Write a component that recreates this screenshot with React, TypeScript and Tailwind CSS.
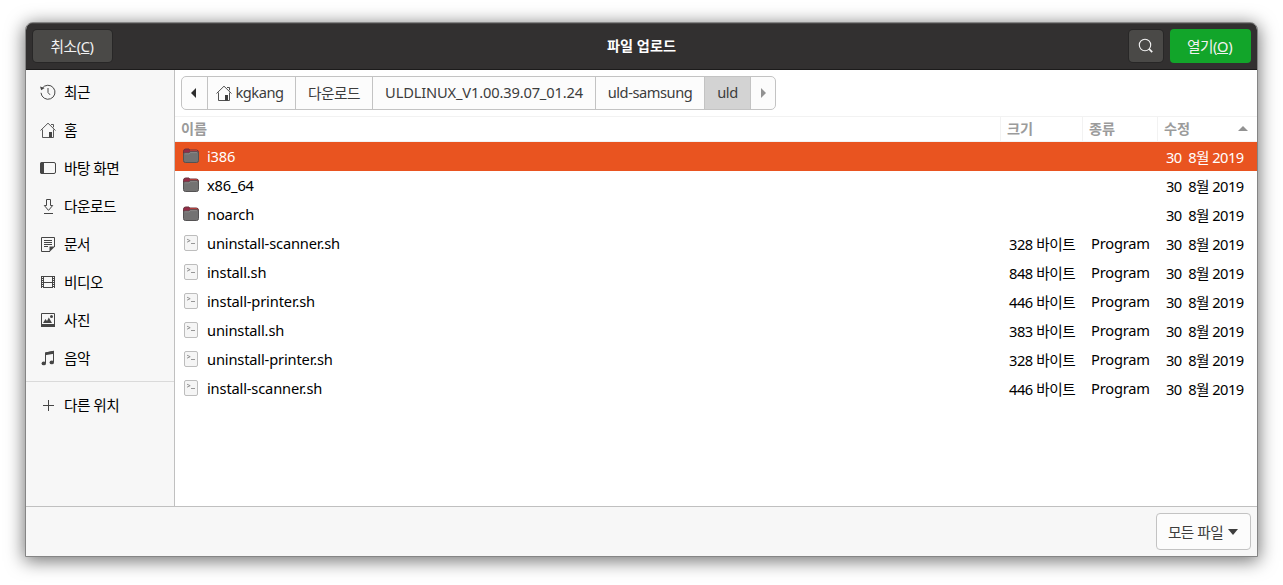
import type { ReactNode } from "react";
import clsx from "clsx";

const svg = (children: ReactNode) => (
  <svg width="16" height="16" viewBox="0 0 16 16" fill="none" stroke="currentColor" className="shrink-0">{children}</svg>
);

const HomeIcon = () => svg(<>
  <path d="M.5 8.5 8 1.2l7.5 7.3M2.5 7.5v8h11v-8M11 2.5h2.5v2.8" strokeWidth=".9" />
  <path d="M9 10h3v5.5H9z" fill="currentColor" stroke="none" />
</>);

const RecentIcon = () => svg(<>
  <path d="M2.2 4.3A7 7 0 1 1 1 8.8M8 4v4.5l2 2.3" />
  <path d="M0 2.5 1.2 6.3 4.6 4z" fill="currentColor" stroke="none" />
</>);

const DesktopIcon = () => svg(<>
  <rect x=".5" y="2.5" width="15" height="11" rx="1.5" />
  <path d="M0 4q0-2 2-2h2v12H2q-2 0-2-2z" fill="currentColor" stroke="none" />
</>);

const DownloadIcon = () => svg(<path d="M6.5 1.5h4v6h2.2L8.5 12.4 4.3 7.5h2.2zM4 15.5h9" />);

const DocumentIcon = () => svg(<>
  <path d="M14.5 11V1.5h-13v14H10M4 4.5h8M4 6.5h8M4 8.5h8M4 10.5h4" />
  <path d="M9.5 16v-5.5H15z" fill="currentColor" stroke="none" />
</>);

const VideoIcon = () => svg(<>
  <path d="M3.5 2v12M12.5 2v12M3 2.5h10M3 8.5h10M3 13.5h10" />
  <path d="M2.5 2v12M13.5 2v12" strokeDasharray="1 1" />
  <path d="M1.5 2v12M14.5 2v12" />
</>);

const PictureIcon = () => svg(<>
  <path d="M1.5 1.5h13v13h-13z" />
  <path d="M1 12h14v3H1zM3 11l2.5-4 1.5 2 1.8-3.5L12 11z" fill="currentColor" stroke="none" />
  <circle cx="11.5" cy="4.5" r="1.5" fill="currentColor" stroke="none" />
</>);

const MusicIcon = () => svg(<>
  <path d="M5.5 13V3l8-1.6V12" />
  <path d="M5 2.4 14 .8v3L5 5.2z" fill="currentColor" stroke="none" />
  <ellipse cx="3.8" cy="13.4" rx="2.2" ry="1.9" fill="currentColor" stroke="none" />
  <ellipse cx="11.8" cy="12.4" rx="2.2" ry="1.9" fill="currentColor" stroke="none" />
</>);

const PlusIcon = () => svg(<path d="M8.5 3v11M3 8.5h11" />);

const SearchIcon = () => svg(<>
  <circle cx="7" cy="7" r="5.7" strokeWidth="1.1" />
  <path d="m11.2 11.2 3 3" strokeWidth="1.7" />
</>);

const FolderIcon = () => (
  <svg width="16" height="16" viewBox="0 0 16 16" className="shrink-0">
    <path d="M.5 3.2Q.5 1 2.7 1h3.1l1.1 1h6.4q2.2 0 2.2 2.2V8H.5z" fill="#942c46" stroke="#66343d" />
    <path d="M7 2.8h7l1 1" stroke="#c9463a" fill="none" />
    <path d="M.5 6q0-1 1-1h4.2l1.4-1.2h7.2q1.2 0 1.2 1.2v7.6q0 1.9-1.9 1.9H2.4Q.5 14.5.5 12.6z" fill="#737272" stroke="#545253" />
    <path d="M1.5 5.8H6l1.400-1.200h6.800" stroke="#989595" strokeWidth=".7" fill="none" />
  </svg>
);

const ScriptIcon = () => (
  <svg width="16" height="16" viewBox="0 0 16 16" fill="none" className="shrink-0">
    <rect x="1.5" y=".5" width="13" height="15" rx="1.5" fill="#f5f5f5" stroke="#bdbdbd" />
    <path d="m4 4.2 3.2 1.5L4 7.2M8 8.5h4" stroke="#8c8c8c" strokeWidth=".9" />
  </svg>
);

const places = [
  { name: "최근", Icon: RecentIcon },
  { name: "홈", Icon: HomeIcon },
  { name: "바탕 화면", Icon: DesktopIcon },
  { name: "다운로드", Icon: DownloadIcon },
  { name: "문서", Icon: DocumentIcon },
  { name: "비디오", Icon: VideoIcon },
  { name: "사진", Icon: PictureIcon },
  { name: "음악", Icon: MusicIcon },
];

const files = [
  { name: "i386", folder: true, selected: true },
  { name: "x86_64", folder: true },
  { name: "noarch", folder: true },
  { name: "uninstall-scanner.sh", size: "328" },
  { name: "install.sh", size: "848" },
  { name: "install-printer.sh", size: "446" },
  { name: "uninstall.sh", size: "383" },
  { name: "uninstall-printer.sh", size: "328" },
  { name: "install-scanner.sh", size: "446" },
];

const Place = ({ name, Icon }: { name: string; Icon: () => ReactNode }) => (
  <div className="flex h-[38px] items-center gap-2 pl-3.5 text-black">
    <span className="text-[#454545]"><Icon /></span>
    <span className="tracking-[-0.5px]">{name}</span>
  </div>
);

const App = () => (
  <div className="h-[585px] overflow-hidden bg-white pl-[25px] pt-[22px] font-['Noto_Sans','Noto_Sans_CJK_KR',sans-serif] text-[14.67px] leading-5 whitespace-nowrap">
    <div className="flex h-[535px] w-[1233px] flex-col overflow-hidden rounded-t-lg border border-[#858585] bg-white shadow-[0_3px_18px_1px_rgba(0,0,0,0.55)]">
      <header className="flex h-[47px] shrink-0 items-center border-b border-[#1c1b1b] bg-[#323030] px-1.5 text-[#f2f2f2] shadow-[inset_0_1px_#474545]">
        <div className="flex flex-1">
          <button className="ml-px h-8 w-[79px] rounded-[4px] bg-[#4a4947] pr-px tracking-[-0.4px] shadow-[0_0_0_1px_#282727]">취소(<u>C</u>)</button>
        </div>
        <h1 className="text-[14.2px] font-bold text-white">파일 업로드</h1>
        <div className="flex flex-1 items-center justify-end gap-[7px]">
          <button className="flex h-8 w-[34px] items-center justify-center rounded-[4px] bg-[#4a4947] shadow-[0_0_0_1px_#282727]"><SearchIcon /></button>
          <button className="h-[34px] w-[81px] rounded-[4px] bg-[#12a52a] pr-0.5 tracking-[-0.4px]">열기(<u>O</u>)</button>
        </div>
      </header>

      <div className="flex min-h-0 flex-1">
        <aside className="w-[149px] shrink-0 border-r border-[#c0c0c0] bg-[#f7f7f7] pt-[3px]">
          {places.map((p) => <Place key={p.name} {...p} />)}
          <div className="my-1 border-t border-[#dadada]" />
          <Place name="다른 위치" Icon={PlusIcon} />
        </aside>

        <main className="min-w-0 flex-1">
          <div className="h-[46px] pl-1.5 pt-1.5">
            <nav className="flex h-[34px] w-[595px] overflow-hidden rounded-[5px] border border-[#c3c3c3] bg-[#fcfcfc] tracking-[-0.16px] text-[#3d3d3d] *:flex *:items-center *:justify-center *:border-r *:border-[#c3c3c3]">
              <div className="w-[26px] pr-0.5"><svg width="5" height="10"><path d="M5 0v10L0 5z" fill="#2e2e2e" /></svg></div>
              <div className="w-[88px] gap-1 pr-1 tracking-[-0.5px]"><HomeIcon /><span className="pb-0.5">kgkang</span></div>
              <div className="w-[77px] tracking-[-0.5px]">다운로드</div>
              <div className="w-[223px] pb-0.5">ULDLINUX_V1.00.39.07_01.24</div>
              <div className="w-[109px] pb-0.5 tracking-[-0.45px]">uld-samsung</div>
              <div className="w-[46px] bg-[#d3d3d3] pb-0.5 tracking-[-0.5px]">uld</div>
              <div className="flex-1 border-r-0!"><svg width="5" height="10"><path d="M0 0v10l5-5z" fill="#929292" /></svg></div>
            </nav>
          </div>

          <div className="grid h-[26px] grid-cols-[826px_82px_75px_1fr] border-y border-[#f2f2f2] text-[14.2px] font-bold text-[#9b9b9b] *:flex *:items-center *:border-r *:border-[#f2f2f2] *:pl-1.5">
            <div>이름</div>
            <div>크기</div>
            <div>종류</div>
            <div className="justify-between border-r-0! pr-[9px]">수정<svg width="10" height="5" className="mb-0.5"><path d="M0 5h10L5 0z" fill="#929292" /></svg></div>
          </div>

          {files.map((f) => (
            <div key={f.name} className={clsx("grid h-[29px] grid-cols-[834px_82px_75px_1fr] items-center", f.selected ? "bg-[#e95420] text-white" : "text-black")}>
              <div className="flex items-center gap-2 pb-0.5 pl-2">
                {f.folder ? <FolderIcon /> : <ScriptIcon />}
                <span className="tracking-[-0.16px]">{f.name}</span>
              </div>
              <div className="tracking-[-0.45px]">{f.size && <>{f.size} 바이트</>}</div>
              <div className="pb-0.5 tracking-[-0.2px]">{f.size && "Program"}</div>
              <div className="tracking-[-0.55px] whitespace-pre">30  8월 2019</div>
            </div>
          ))}
        </main>
      </div>

      <footer className="flex h-[50px] shrink-0 items-center justify-end border-t border-[#c0c0c0] bg-[#f7f7f7] pr-1.5">
        <button className="flex h-[37px] w-[95px] items-center justify-center gap-[5px] rounded-[4px] border border-[#c3c3c3] bg-[#fcfcfc] pr-px tracking-[-0.5px] text-[#3d3d3d]">
          모든 파일<svg width="10" height="6"><path d="M0 0h10L5 6z" fill="#3d3d3d" /></svg>
        </button>
      </footer>
    </div>
  </div>
);

export default App;
